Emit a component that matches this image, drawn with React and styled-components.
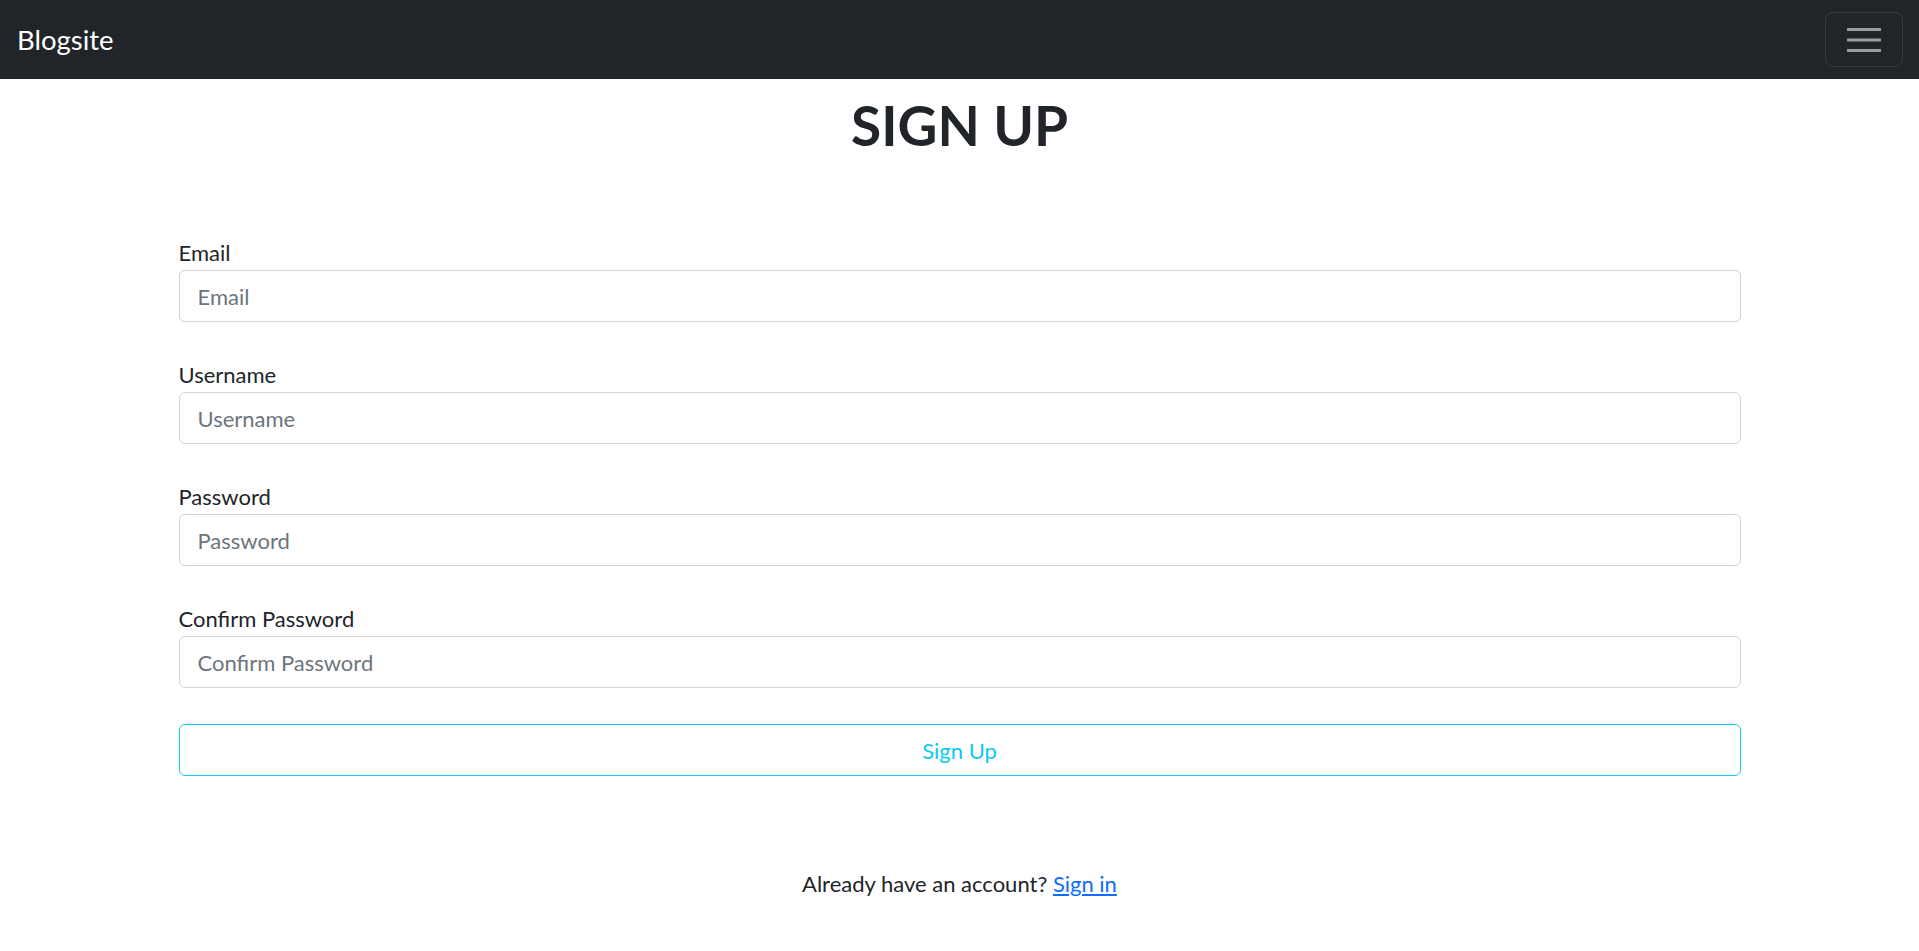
import React from 'react'
import styled, { createGlobalStyle } from 'styled-components';

const GlobalStyle = createGlobalStyle`
  * {
    box-sizing: border-box;
  }

  body {
    margin: 0;
    background: #fff;
    color: #212529;
    font-family: Lato, "Open Sans", sans-serif;
  }
`;

const fields = [
  { id: 'email', label: 'Email', type: 'email' },
  { id: 'username', label: 'Username', type: 'text' },
  { id: 'password', label: 'Password', type: 'password' },
  { id: 'confirm', label: 'Confirm Password', type: 'password' },
];

const App = () => {
  return (
    <>
      <GlobalStyle />
      <Navbar>
        <Brand href="#">Blogsite</Brand>
        <Toggler type="button" aria-label="Toggle navigation">
          <svg width="34" height="26" viewBox="0 0 34 26">
            <path d="M1 2.5h32M1 13h32M1 23.5h32" stroke="rgba(255,255,255,0.55)" strokeWidth="3.2" strokeLinecap="round" />
          </svg>
        </Toggler>
      </Navbar>
      <Main>
        <Title>SIGN UP</Title>
        <Form onSubmit={e => e.preventDefault()}>
          {fields.map(field => (
            <Field key={field.id}>
              <Label htmlFor={field.id}>{field.label}</Label>
              <Input id={field.id} type={field.type} placeholder={field.label} />
            </Field>
          ))}
          <SubmitButton type="submit">Sign Up</SubmitButton>
        </Form>
        <Footer>
          Already have an account? <a href="#">Sign in</a>
        </Footer>
      </Main>
    </>
  )
}

const Navbar = styled.nav`
  display: flex;
  align-items: center;
  justify-content: space-between;
  height: 79px;
  padding: 0 16px 0 17px;
  background: #212529;
`;

const Brand = styled.a`
  color: #fff;
  font-size: 27.5px;
  line-height: 1.5;
  text-decoration: none;
`;

const Toggler = styled.button`
  display: flex;
  align-items: center;
  justify-content: center;
  width: 78px;
  height: 55px;
  padding: 0;
  background: transparent;
  border: 1px solid rgba(255, 255, 255, 0.1);
  border-radius: 8px;
`;

const Main = styled.main`
  padding: 13px 0 40px;
`;

const Title = styled.h1`
  margin: 0 0 78px;
  font-size: 55px;
  font-weight: 700;
  line-height: 1.2;
  text-align: center;
  color: #212529;
`;

const Form = styled.form`
  display: flex;
  flex-direction: column;
  gap: 36px;
  width: 1562px;
  margin: 0 auto;
`;

const Field = styled.div`
  display: flex;
  flex-direction: column;
  gap: 1px;
`;

const Label = styled.label`
  font-size: 22px;
  line-height: 33px;
  color: #212529;
`;

const Input = styled.input`
  height: 52px;
  padding: 0 18px;
  font-family: inherit;
  font-size: 22px;
  color: #212529;
  border: 1px solid #ced4da;
  border-radius: 6px;
  outline: none;

  &::placeholder {
    color: #6c757d;
  }
`;

const SubmitButton = styled.button`
  height: 52px;
  font-family: inherit;
  font-size: 22px;
  color: #0dcaf0;
  background: transparent;
  border: 1px solid #0dcaf0;
  border-radius: 6px;
  cursor: pointer;
`;

const Footer = styled.p`
  margin: 91px 0 0;
  font-size: 22px;
  line-height: 33px;
  text-align: center;
  color: #212529;

  a {
    color: #0d6efd;
  }
`;

export default App
